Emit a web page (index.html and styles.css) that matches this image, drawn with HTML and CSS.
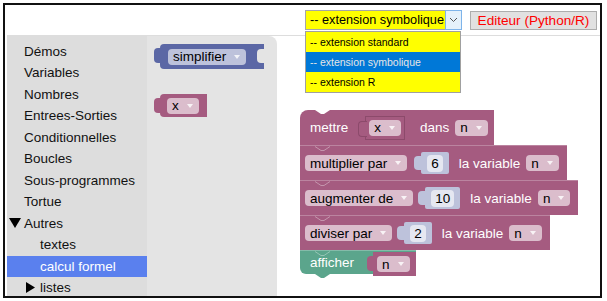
FILE: index.html
```html
<!DOCTYPE html>
<html lang="fr">
<head>
  <meta charset="UTF-8">
  <title>Blockly - calcul formel</title>
  <link rel="stylesheet" href="styles.css">
</head>
<body>
  <div class="frame">

    <!-- Top bar -->
    <div class="topbar">
      <div class="select">
        <span class="select-value">-- extension symbolique</span>
        <span class="select-arrow">
          <svg width="9" height="6" viewBox="0 0 9 6"><polyline points="1,1 4.5,4.5 8,1" fill="none" stroke="#555" stroke-width="1"/></svg>
        </span>
        <ul class="select-list">
          <li>-- extension standard</li>
          <li class="is-selected">-- extension symbolique</li>
          <li>-- extension R</li>
        </ul>
      </div>
      <button class="editor-btn">Editeur (Python/R)</button>
    </div>

    <div class="main">
      <!-- Toolbox -->
      <ul class="toolbox">
        <li class="tree-row"><span class="tree-icon"></span>Démos</li>
        <li class="tree-row"><span class="tree-icon"></span>Variables</li>
        <li class="tree-row"><span class="tree-icon"></span>Nombres</li>
        <li class="tree-row"><span class="tree-icon"></span>Entrees-Sorties</li>
        <li class="tree-row"><span class="tree-icon"></span>Conditionnelles</li>
        <li class="tree-row"><span class="tree-icon"></span>Boucles</li>
        <li class="tree-row"><span class="tree-icon"></span>Sous-programmes</li>
        <li class="tree-row"><span class="tree-icon"></span>Tortue</li>
        <li class="tree-row">
          <span class="tree-icon"><svg class="open" width="12" height="10" viewBox="0 0 12 10"><polygon points="0,0 12,0 6,10" fill="#000"/></svg></span>Autres
        </li>
        <li class="tree-row child"><span class="tree-icon"></span>textes</li>
        <li class="tree-row child selected"><span class="tree-icon"></span>calcul formel</li>
        <li class="tree-row child">
          <span class="tree-icon"><svg class="closed" width="9" height="11" viewBox="0 0 9 11"><polygon points="0,0 9,5.5 0,11" fill="#000"/></svg></span>listes
        </li>
      </ul>

      <!-- Flyout -->
      <div class="flyout">
        <div class="block value blue output socket simplify">
          <span class="field">simplifier<i class="arrow"></i></span>
        </div>
        <div class="block value pink output var-x">
          <span class="field">x<i class="arrow"></i></span>
        </div>
      </div>

      <!-- Workspace -->
      <div class="workspace">
        <div class="stack">
          <div class="block stmt pink first">
            <svg class="notch" width="15" height="4" viewBox="0 0 15 4"><polygon points="0,0 6,4 9,4 15,0" fill="#fff"/></svg>
            <span class="label">mettre</span>
            <div class="var-block outlined output"><span class="field">x<i class="arrow"></i></span></div>
            <span class="label dans">dans</span>
            <span class="field var-field">n<i class="arrow"></i></span>
          </div>

          <div class="block stmt pink">
            <svg class="notch" width="15" height="5" viewBox="0 0 15 5"><polyline points="0,0.5 6,4.5 9,4.5 15,0.5" fill="none" stroke="rgba(255,255,255,.35)"/></svg>
            <span class="field">multiplier par<i class="arrow"></i></span>
            <div class="num output wide"><span class="num-field">6</span></div>
            <span class="label">la variable</span>
            <span class="field var-field">n<i class="arrow"></i></span>
          </div>

          <div class="block stmt pink">
            <svg class="notch" width="15" height="5" viewBox="0 0 15 5"><polyline points="0,0.5 6,4.5 9,4.5 15,0.5" fill="none" stroke="rgba(255,255,255,.35)"/></svg>
            <span class="field">augmenter de<i class="arrow"></i></span>
            <div class="num output"><span class="num-field">10</span></div>
            <span class="label">la variable</span>
            <span class="field var-field">n<i class="arrow"></i></span>
          </div>

          <div class="block stmt pink">
            <svg class="notch" width="15" height="5" viewBox="0 0 15 5"><polyline points="0,0.5 6,4.5 9,4.5 15,0.5" fill="none" stroke="rgba(255,255,255,.35)"/></svg>
            <span class="field">diviser par<i class="arrow"></i></span>
            <div class="num output"><span class="num-field">2</span></div>
            <span class="label">la variable</span>
            <span class="field var-field">n<i class="arrow"></i></span>
          </div>

          <div class="block print green">
            <svg class="notch" width="15" height="5" viewBox="0 0 15 5"><polyline points="0,0.5 6,4.5 9,4.5 15,0.5" fill="none" stroke="rgba(255,255,255,.35)"/></svg>
            <span class="label">afficher</span>
            <div class="var-block output pink-var"><span class="field">n<i class="arrow"></i></span></div>
            <svg class="tab" width="15" height="4" viewBox="0 0 15 4"><polygon points="0,0 6,4 9,4 15,0" fill="#5ba58c"/></svg>
          </div>
        </div>
      </div>
    </div>
  </div>
</body>
</html>
```

FILE: styles.css
```css
/* General */
* {
  box-sizing: border-box;
}

body {
  margin: 0;
  font-family: 'Liberation Sans', Arial, sans-serif;
  background: #fff;
  color: #000;
}

.frame {
  margin: 3px 0 0 3px;
  width: 599px;
  height: 295px;
  border: 2px solid #111;
  padding-left: 2px;
  display: flex;
  flex-direction: column;
}

/* Top bar */
.topbar {
  flex: none;
  height: 30px;
  display: flex;
  justify-content: flex-end;
  align-items: flex-start;
  gap: 8px;
  padding: 5px 3px 0 0;
  position: relative;
  z-index: 5;
}

.select {
  position: relative;
  width: 157px;
  height: 20px;
  display: flex;
  border: 1px solid #a6a6a6;
  background: #ffff00;
}

.select-value {
  flex: 1;
  font-size: 12.7px;
  line-height: 18px;
  padding-left: 4px;
  white-space: nowrap;
  overflow: hidden;
}

.select-arrow {
  width: 17px;
  margin: -1px -1px -1px 0;
  border: 1px solid #7eb4ea;
  background: #e5f1fb;
  display: flex;
  align-items: center;
  justify-content: center;
}

.select-list {
  position: absolute;
  top: 20px;
  left: -1px;
  width: 156px;
  margin: 0;
  padding: 0;
  list-style: none;
  border: 1px solid #a0a0a0;
  background: #ffff00;
}

.select-list li {
  height: 20px;
  line-height: 20px;
  padding-left: 4px;
  font-size: 10.5px;
  white-space: nowrap;
}

.select-list li.is-selected {
  background: #0078d7;
  color: #e6e6e6;
}

.editor-btn {
  margin-top: 1px;
  width: 127px;
  height: 19px;
  padding: 0;
  background: #e1e1e1;
  border: 1px solid #adadad;
  color: #f00;
  font-family: 'Liberation Sans', Arial, sans-serif;
  font-size: 13.6px;
}

/* Main area */
.main {
  flex: 1;
  min-height: 0;
  overflow: hidden;
  display: flex;
  border-top: 1px solid #ddd;
}

.toolbox {
  width: 140px;
  margin: 0;
  padding: 4.5px 0 0;
  list-style: none;
  background: #ddd;
}

.tree-row {
  height: 21.5px;
  display: flex;
  align-items: center;
  padding-left: 1px;
  font-size: 13.5px;
  color: #111;
  white-space: nowrap;
}

.tree-row.child {
  padding-left: 17px;
}

.tree-row.selected {
  background: #5a80ee;
  color: #fff;
}

.tree-icon {
  width: 16px;
  display: flex;
  align-items: center;
}

.tree-icon .open {
  margin-left: 1px;
}

.tree-icon .closed {
  margin-left: 2px;
}

.flyout {
  width: 130px;
  background: #e4e4e4;
  border-top-right-radius: 8px;
  padding: 8px 0 0 13px;
  display: flex;
  flex-direction: column;
  align-items: flex-start;
  gap: 25px;
}

.workspace {
  flex: 1;
  position: relative;
  background: #fff;
}

.stack {
  position: absolute;
  left: 23px;
  top: 74px;
  display: flex;
  flex-direction: column;
  align-items: flex-start;
}

/* Blocks */
.block {
  position: relative;
  display: flex;
  align-items: center;
  color: #fff;
  font-size: 13.5px;
  white-space: nowrap;
}

.pink { background: #a55b80; }
.blue { background: #5b67a5; }
.green { background: #5ba58c; }

.field {
  display: flex;
  align-items: center;
  gap: 8px;
  height: 16px;
  padding: 0 6px 0 5px;
  border-radius: 4px;
  background: rgba(255, 255, 255, 0.6);
  color: #000;
}

.arrow {
  width: 0;
  height: 0;
  border-left: 3px solid transparent;
  border-right: 3px solid transparent;
  border-top: 4px solid rgba(255, 255, 255, 0.8);
}

.output::before {
  content: '';
  position: absolute;
  left: -6px;
  top: 4px;
  width: 6px;
  height: 15px;
  background: inherit;
  border-radius: 4px 0 0 4px;
}

/* Flyout blocks */
.value {
  border-radius: 4px 0 0 4px;
}

.simplify {
  height: 25px;
  padding: 0 18px 0 8px;
}

.socket::after {
  content: '';
  position: absolute;
  right: 0;
  top: 5px;
  width: 7px;
  height: 14px;
  background: #e4e4e4;
  border-radius: 4px 0 0 4px;
}

.var-x {
  height: 23px;
  padding: 0 8px 0 7px;
}

/* Statement blocks */
.stmt {
  height: 35px;
  padding: 0 8px 0 5px;
}

.stmt + .stmt,
.stmt + .print {
  border-top: 1px solid rgba(255, 255, 255, 0.25);
}

.first {
  padding-left: 10px;
  padding-right: 6px;
  border-top-left-radius: 8px;
}

.notch {
  position: absolute;
  left: 15px;
  top: 0;
}

.stmt .label {
  margin-left: 10px;
}

.first .label:first-of-type {
  margin-left: 0;
}

.first .dans {
  margin-left: 15px;
}

.var-field {
  margin-left: 6px;
}

.var-block {
  position: relative;
  height: 24px;
  display: flex;
  align-items: center;
  background: #a55b80;
  padding: 0 6px 0 4px;
}

.outlined {
  margin-left: 17px;
  border: 1px solid #8c4a6b;
  padding: 0 3px;
}

.outlined::before {
  left: -8px;
  top: 4px;
  width: 8px;
  height: 14px;
  border: 1px solid #8c4a6b;
  border-right: none;
}

.num {
  position: relative;
  height: 22px;
  margin-left: 12px;
  padding: 0 6px;
  display: flex;
  align-items: center;
  background: #bdc2db;
  border-radius: 2px;
}

.num.wide {
  margin-left: 14px;
}

.num::before {
  left: -7px;
  top: 4px;
  width: 7px;
  height: 14px;
}

.num-field {
  height: 17px;
  padding: 0 4px;
  display: flex;
  align-items: center;
  border-radius: 4px;
  background: #e5e7f1;
  color: #000;
}

/* afficher */
.print {
  height: 24px;
  padding-left: 10px;
  align-items: flex-start;
  border-bottom-left-radius: 6px;
}

.print .label {
  align-self: center;
}

.pink-var {
  margin-left: 19px;
  margin-top: 1px;
}

.tab {
  position: absolute;
  left: 15px;
  bottom: -4px;
}
```
